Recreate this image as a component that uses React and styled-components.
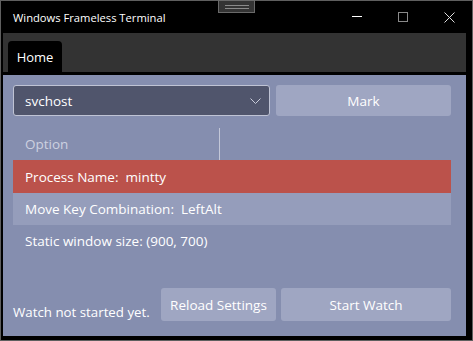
import React from "react";
import styled, { createGlobalStyle } from "styled-components";

const Global = createGlobalStyle`
  html, body { margin: 0; padding: 0; background: #000; }
  body { font-family: "Open Sans", "Noto Sans", sans-serif; }
  * { box-sizing: border-box; }
`;

const Window = styled.div`
  position: relative;
  width: 473px;
  height: 341px;
  border: 1px solid #5f5f5f;
  background: #000;
  display: flex;
  flex-direction: column;
`;

const TitleBar = styled.div`
  height: 32px;
  display: flex;
  align-items: center;
  padding-left: 12px;
  color: #fff;
  font-size: 11.2px;
`;

const Title = styled.span`
  flex: 1;
  margin-top: 1px;
`;

const Grip = styled.div`
  position: absolute;
  top: -1px;
  left: 217px;
  width: 37px;
  height: 13px;
  background: #343434;
  border: 1px solid #6a6a6a;
  display: flex;
  flex-direction: column;
  justify-content: center;
  align-items: center;
  gap: 2px;
`;

const GripLine = styled.div`
  width: 24px;
  height: 1px;
  background: #8a8a8a;
`;

const CaptionButton = styled.div`
  width: 46px;
  height: 32px;
  display: flex;
  align-items: center;
  justify-content: center;
`;

const Body = styled.div`
  flex: 1;
  display: flex;
  flex-direction: column;
  padding: 0 6px 4px 2px;
`;

const TabStrip = styled.div`
  height: 39px;
  background: #333333;
  margin-bottom: 3px;
  display: flex;
  align-items: flex-end;
  padding-left: 5px;
`;

const Tab = styled.div`
  height: 34px;
  margin-bottom: -3px;
  width: 54px;
  background: #000;
  border-radius: 4px 4px 0 0;
  color: #fff;
  font-size: 13px;
  display: flex;
  align-items: center;
  justify-content: center;
  padding-bottom: 2px;
`;

const Content = styled.div`
  flex: 1;
  background: #858eaf;
  padding: 10px 15px 15px 10px;
  display: flex;
  flex-direction: column;
  color: #fff;
  font-size: 13px;
`;

const TopRow = styled.div`
  display: flex;
  gap: 6px;
  height: 31px;
`;

const Combo = styled.div`
  width: 257px;
  background: #50556c;
  border: 1px solid #bfc3d4;
  border-radius: 3px;
  display: flex;
  align-items: center;
  justify-content: space-between;
  padding: 0 8px 0 11px;
  font-size: 13.5px;
`;

const Button = styled.div`
  width: ${(p) => p.$w}px;
  height: ${(p) => p.$h || 31}px;
  background: #9fa6c2;
  border-radius: 3px;
  display: flex;
  align-items: center;
  justify-content: center;
  color: #fff;
  font-size: 13.5px;
`;

const Table = styled.div`
  margin-top: 12px;
  display: flex;
  flex-direction: column;
`;

const Header = styled.div`
  height: 32px;
  display: flex;
  color: #cdd1e0;
  font-size: 13.5px;
`;

const HeaderCell = styled.div`
  width: 207px;
  padding-left: 12px;
  display: flex;
  align-items: center;
  border-right: 1px solid #c3c7d8;
`;

const Row = styled.div`
  height: ${(p) => p.$h || 32}px;
  display: flex;
  align-items: center;
  padding-left: 12px;
  background: ${(p) => p.$bg || "transparent"};
  white-space: pre;
  font-size: 13.5px;
`;

const Footer = styled.div`
  margin-top: auto;
  display: flex;
  align-items: flex-end;
`;

const Status = styled.div`
  width: 148px;
  padding-bottom: 0;
  font-size: 13.3px;
`;

const Buttons = styled.div`
  display: flex;
  gap: 5px;
`;

export default function App() {
  return (
    <>
      <Global />
      <Window>
        <Grip>
          <GripLine />
          <GripLine />
        </Grip>
        <TitleBar>
          <Title>Windows Frameless Terminal</Title>
          <CaptionButton>
            <svg width="10" height="10" viewBox="0 0 10 10">
              <line x1="0" y1="4.5" x2="10" y2="4.5" stroke="#fff" strokeWidth="1" />
            </svg>
          </CaptionButton>
          <CaptionButton>
            <svg width="10" height="10" viewBox="0 0 10 10">
              <rect x="0.5" y="0.5" width="9" height="9" fill="none" stroke="#8a8a8a" strokeWidth="1" />
            </svg>
          </CaptionButton>
          <CaptionButton>
            <svg width="11" height="11" viewBox="0 0 11 11">
              <path d="M0.5 0.5 L10.5 10.5 M10.5 0.5 L0.5 10.5" stroke="#dedede" strokeWidth="1" />
            </svg>
          </CaptionButton>
        </TitleBar>
        <Body>
          <TabStrip>
            <Tab>Home</Tab>
          </TabStrip>
          <Content>
            <TopRow>
              <Combo>
                <span>svchost</span>
                <svg width="11" height="6" viewBox="0 0 11 6">
                  <polyline points="0.5,0.5 5.5,5.5 10.5,0.5" fill="none" stroke="#c9ccda" strokeWidth="1" />
                </svg>
              </Combo>
              <Button $w={175}>Mark</Button>
            </TopRow>
            <Table>
              <Header>
                <HeaderCell>Option</HeaderCell>
              </Header>
              <Row $bg="#bb524b" $h={33}>Process Name:  mintty</Row>
              <Row $bg="#959dbb">Move Key Combination:  LeftAlt</Row>
              <Row>Static window size: (900, 700)</Row>
            </Table>
            <Footer>
              <Status>Watch not started yet.</Status>
              <Buttons>
                <Button $w={115} $h={33}>Reload Settings</Button>
                <Button $w={170} $h={33}>Start Watch</Button>
              </Buttons>
            </Footer>
          </Content>
        </Body>
      </Window>
    </>
  );
}
